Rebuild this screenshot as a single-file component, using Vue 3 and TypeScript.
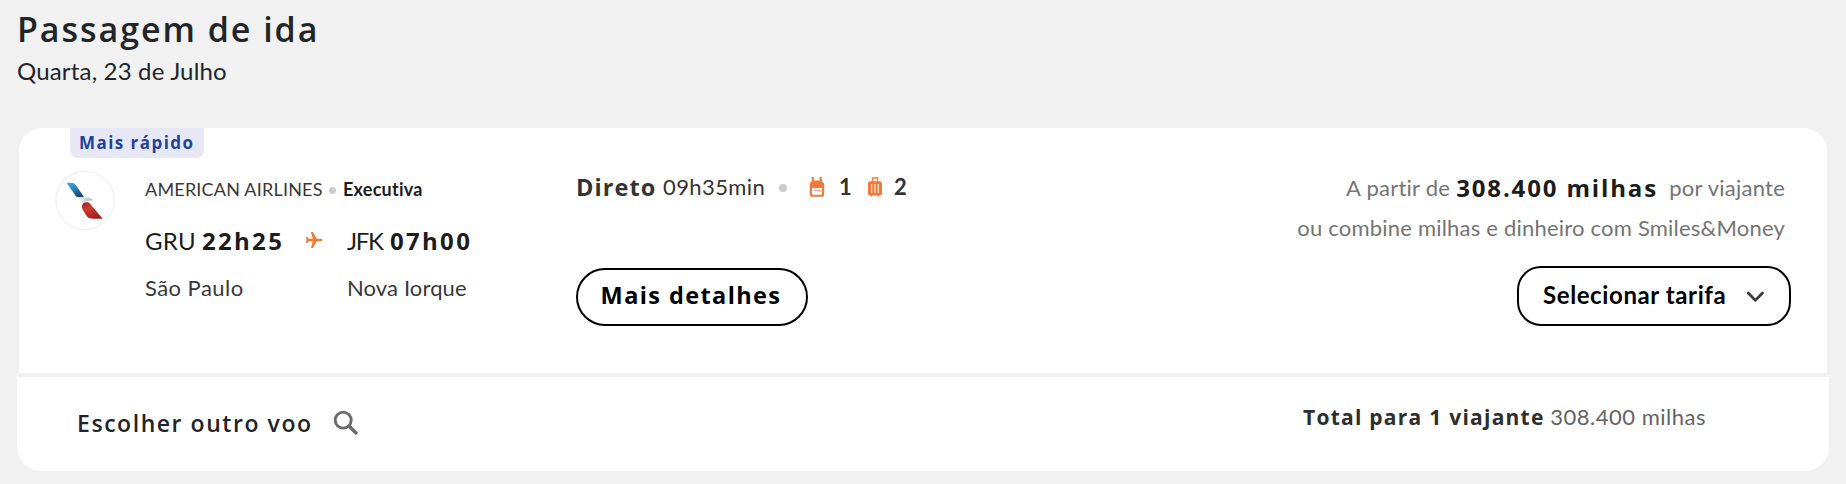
<script setup lang="ts">
interface Stop {
  code: string
  time: string
  city: string
}

const departure: Stop = { code: 'GRU', time: '22h25', city: 'São Paulo' }
const arrival: Stop = { code: 'JFK', time: '07h00', city: 'Nova Iorque' }
const miles = '308.400 milhas'
</script>

<template>
  <main class="page">
    <header class="heading">
      <h1 class="title">Passagem de ida</h1>
      <p class="date">Quarta, 23 de Julho</p>
    </header>

    <section class="card">
      <span class="badge">Mais rápido</span>

      <div class="logo">
        <svg width="60" height="60" viewBox="0 0 60 60">
          <defs>
            <linearGradient id="blue" x1="0" y1="0" x2="0.6" y2="1">
              <stop offset="0" stop-color="#45b4e6" />
              <stop offset="0.6" stop-color="#2577b5" />
              <stop offset="1" stop-color="#17436f" />
            </linearGradient>
            <linearGradient id="red" x1="0" y1="0" x2="0.7" y2="1">
              <stop offset="0" stop-color="#8e2023" />
              <stop offset="0.4" stop-color="#d23a2f" />
              <stop offset="1" stop-color="#9c1c20" />
            </linearGradient>
            <linearGradient id="silver" x1="0" y1="0" x2="1" y2="0">
              <stop offset="0" stop-color="#f1f3f5" />
              <stop offset="1" stop-color="#a9b2bb" />
            </linearGradient>
          </defs>
          <circle cx="30" cy="29.5" r="29.1" fill="#fff" stroke="#efefef" stroke-width="1.2" />
          <path d="M11.5 11.7h4.8c2.2 0 3.5 0.9 4.6 2.5l8.3 12.1h-5.3c-2.2 0-3.4-1-4.5-3.2z" fill="url(#blue)" />
          <path d="M23.6 26.6h7.5c3.8 0 6.5 1.3 7.3 3.3-2.2-0.7-5.6-0.3-9 1.6l-2.4 1.6c-0.3-2.6-1.5-4.6-3.4-6.5z" fill="url(#silver)" />
          <path d="M28.3 32.3c2.1-1.5 5-1.5 6.5 0.2l12.9 15.2H37.5c-3.8 0-5.4-1.5-7.5-5.1l-2.2-3.9c-1.1-2-1.4-4.7 0.5-6.4z" fill="url(#red)" />
        </svg>
      </div>

      <div class="flight">
        <div class="airline">
          <span>AMERICAN AIRLINES</span>
          <i class="dot small"></i>
          <strong>Executiva</strong>
        </div>
        <div class="route">
          <div class="stop">
            <p class="airport"><span>{{ departure.code }}</span><b>{{ departure.time }}</b></p>
            <p class="city">{{ departure.city }}</p>
          </div>
          <svg class="plane" width="18" height="18" viewBox="0 0 18 18" fill="#ee7b3c">
            <path d="M17.4 9c0 0.8-0.7 1.2-1.5 1.2h-4.1L7.9 17H5.9l1.900-6.800H3.900L2.500 12H0.800l0.900-3L0.800 6h1.700l1.400 1.800h3.900L5.900 1h2l3.900 6.800h4.100c0.800 0 1.500 0.400 1.500 1.200z" />
          </svg>
          <div class="stop">
            <p class="airport jfk"><span>{{ arrival.code }}</span><b>{{ arrival.time }}</b></p>
            <p class="city nova">{{ arrival.city }}</p>
          </div>
        </div>
      </div>

      <div class="summary">
        <div class="facts">
          <b class="direct">Direto</b>
          <span class="duration">09h35min</span>
          <i class="dot"></i>
          <svg class="bag" width="16" height="20" viewBox="0 0 16 20">
            <path d="M2.6 0h2.2v3.5h5.8V0h2.2v4.6c1.7 0.8 2.4 2 2.4 3.7v9.200c0 1.500-0.800 2.300-2.300 2.300H3C1.500 19.800 0.700 19 0.700 17.500V8.300c0-1.700 0.500-2.900 1.900-3.700z" fill="#ee7b3c" />
            <path d="M3 11h10v5.800c0 0.600-0.300 0.900-0.900 0.900H3.900c-0.600 0-0.900-0.300-0.900-0.900z" fill="#fff" />
            <path d="M4.600 13.200h6.600v1.700" fill="none" stroke="#ee7b3c" stroke-width="0.9" />
          </svg>
          <b class="count one">1</b>
          <svg class="case" width="16" height="20" viewBox="0 0 16 20">
            <path d="M5.500 5V1h5v4" fill="none" stroke="#ee7b3c" stroke-width="1.4" />
            <rect x="1" y="4.3" width="14" height="14.2" rx="2.2" fill="#ee7b3c" />
            <path d="M3.500 18h1.900v1.500H3.500zM10.600 18h1.900v1.500h-1.900z" fill="#ee7b3c" />
            <path d="M4.700 7v9M8 7v9M11.300 7v9" stroke="#fff" stroke-opacity="0.8" stroke-width="1.2" />
          </svg>
          <b class="count">2</b>
        </div>
        <button class="details" type="button">Mais detalhes</button>
      </div>

      <div class="fare">
        <p class="price"><span>A partir de</span><b>{{ miles }}</b><span>por viajante</span></p>
        <p class="combine">ou combine milhas e dinheiro com Smiles&amp;Money</p>
        <button class="select" type="button">
          <span>Selecionar tarifa</span>
          <svg width="20" height="12" viewBox="0 0 20 12" fill="none" stroke="#3c3c3c" stroke-width="3" stroke-linecap="round" stroke-linejoin="round">
            <path d="M2.400 1.800l7.600 7.800 7.600-7.800" />
          </svg>
        </button>
      </div>
    </section>

    <footer class="footer">
      <div class="other">
        <span>Escolher outro voo</span>
        <svg width="26" height="26" viewBox="0 0 26 26" fill="none" stroke="#6b6b6b">
          <circle cx="10.2" cy="10.1" r="8" stroke-width="2.9" />
          <path d="M16 16l8 8" stroke-width="3.3" />
        </svg>
      </div>
      <div class="total"><b>Total para 1 viajante</b><span>{{ miles }}</span></div>
    </footer>
  </main>
</template>

<style>
body {
  margin: 0;
  background: #f1f1f1;
}
</style>

<style scoped>
.page {
  box-sizing: border-box;
  width: 1846px;
  height: 484px;
  padding: 7px 17px 0;
  overflow: hidden;
  background: #f1f1f1;
  color: #212529;
  font-family: Lato, 'Open Sans', sans-serif;
  white-space: nowrap;
}
h1,
p {
  margin: 0;
}
.heading {
  height: 121px;
}
.title {
  font: 600 34px/44px 'Open Sans', sans-serif;
  letter-spacing: 1.95px;
}
.date {
  margin-top: 4px;
  font-size: 24px;
  line-height: 32px;
  letter-spacing: 0.17px;
}
.card {
  position: relative;
  display: flex;
  box-sizing: border-box;
  height: 245px;
  margin: 0 2px;
  padding: 0 36px;
  border-radius: 23px 23px 0 0;
  background: #fff;
  color: #1c1c1c;
}
.badge {
  position: absolute;
  left: 51px;
  top: 0;
  box-sizing: border-box;
  width: 134px;
  height: 30px;
  padding-left: 9px;
  border-radius: 0 0 8px 8px;
  background: #e6e9f5;
  color: #24409f;
  font: 700 17px/29px 'Open Sans', sans-serif;
  letter-spacing: 1.45px;
}
.logo {
  width: 60px;
  margin-top: 43px;
}
.flight {
  width: 431px;
  margin-left: 30px;
  padding-top: 47px;
}
.airline {
  display: flex;
  align-items: center;
  height: 28px;
  font-size: 18px;
  line-height: 28px;
  color: #383838;
}
.airline strong {
  letter-spacing: 0.25px;
  color: #1c1c1c;
}
.airline span {
  width: 184px;
  letter-spacing: 0.2px;
}
.dot {
  width: 8px;
  height: 8px;
  border-radius: 50%;
  background: #cbcbcb;
}
.dot.small {
  width: 7px;
  height: 7px;
  margin: 2px 7px 0 0;
}
.route {
  display: flex;
  margin-top: 22px;
}
.stop {
  width: 160px;
}
.plane {
  margin: 6px 24px 0 0;
}
.airport {
  display: flex;
  height: 32px;
  font-size: 24px;
  line-height: 32px;
}
.airport span {
  width: 57px;
  letter-spacing: 0.26px;
}
.airport b {
  font: 700 24px/32px 'Open Sans', sans-serif;
  letter-spacing: 2.3px;
}
.jfk span {
  width: 43px;
  letter-spacing: -1.3px;
}
.city {
  margin-top: 16px;
  font-size: 22px;
  line-height: 30px;
  letter-spacing: 0.45px;
  color: #383838;
}
.nova {
  letter-spacing: 0.12px;
}
.summary {
  padding-top: 42px;
}
.facts {
  display: flex;
  height: 34px;
  line-height: 34px;
  color: #333;
}
.direct {
  width: 87px;
  font: 700 23.5px/34px 'Open Sans', sans-serif;
  letter-spacing: 1.1px;
}
.duration {
  width: 116px;
  font-size: 22px;
  line-height: 33px;
  letter-spacing: 0.4px;
}
.facts .dot {
  margin: 14px 22px 0 0;
}
.bag {
  margin: 7px 14px 0 0;
}
.case {
  margin: 7px 11px 0 0;
}
.count {
  font-size: 22px;
  line-height: 33px;
}
.one {
  width: 28px;
}
.details {
  width: 232px;
  height: 58px;
  margin-top: 64px;
  padding: 0 2px 4px 0;
  border: 2px solid #000;
  border-radius: 29px;
  background: #fff;
  color: #000;
  font: 700 23.5px/30px 'Open Sans', sans-serif;
  letter-spacing: 1.4px;
}
.fare {
  display: flex;
  flex-direction: column;
  align-items: flex-end;
  margin-left: auto;
  padding-top: 44px;
  font-size: 22px;
  line-height: 32px;
  color: #747474;
}
.price {
  display: flex;
  margin-right: 6px;
  letter-spacing: 0.25px;
}
.price b {
  width: 213px;
  margin-left: 6px;
  font: 700 24px/32px 'Open Sans', sans-serif;
  letter-spacing: 1.85px;
  color: #1c1c1c;
}
.combine {
  margin: 8px 6px 0 0;
  letter-spacing: 0.21px;
}
.select {
  display: flex;
  align-items: center;
  box-sizing: border-box;
  width: 274px;
  height: 60px;
  margin-top: 22px;
  padding: 0 24px;
  border: 2px solid #000;
  border-radius: 24px;
  background: #fff;
  color: #000;
  font: 700 24px/30px Lato, sans-serif;
  letter-spacing: 0.6px;
}
.select svg {
  margin: 2px 0 0 20px;
}
.select span {
  padding-bottom: 2px;
}
.footer {
  display: flex;
  justify-content: space-between;
  box-sizing: border-box;
  height: 94px;
  margin-top: 4px;
  padding: 26px 123px 0 60px;
  border-radius: 0 0 24px 24px;
  background: #fff;
}
.other {
  display: flex;
  padding-top: 4px;
  font: 600 23px/32px 'Open Sans', sans-serif;
  letter-spacing: 1.55px;
}
.other span {
  width: 256px;
}
.other svg {
  margin-top: 3px;
}
.total {
  display: flex;
  width: 403px;
  font-size: 22px;
  line-height: 28px;
  letter-spacing: 0.5px;
  color: #636363;
}
.total b {
  width: 248px;
  font: 700 21px/28px 'Open Sans', sans-serif;
  letter-spacing: 1.25px;
  color: #2c2e30;
}
</style>
